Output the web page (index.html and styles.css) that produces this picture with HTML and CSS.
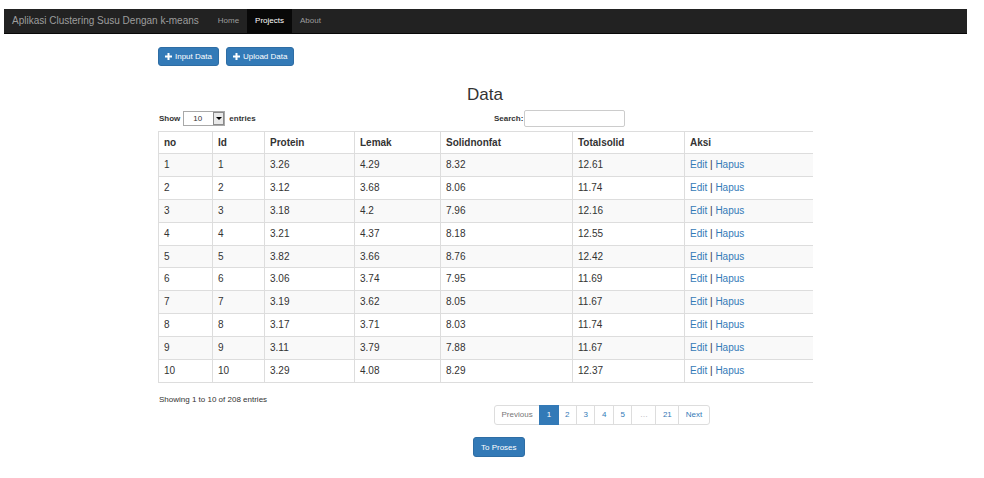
FILE: index.html
```html
<!DOCTYPE html>
<html>
<head>
<meta charset="utf-8">
<title>Data</title>
<link rel="stylesheet" href="styles.css">
</head>
<body>
<div class="page">
  <nav class="navbar">
    <span class="brand">Aplikasi Clustering Susu Dengan k-means</span>
    <ul class="nav">
      <li><a href="#">Home</a></li>
      <li class="active"><a href="#">Projects</a></li>
      <li><a href="#">About</a></li>
    </ul>
  </nav>
  <main class="container">
    <div class="toolbar">
      <button class="btn"><svg class="plus" viewBox="0 0 7 7" width="7" height="7"><path d="M2.5 0h2v2.5h2.5v2h-2.5v2.5h-2v-2.5h-2.5v-2h2.5z"/></svg>Input Data</button>
      <button class="btn"><svg class="plus" viewBox="0 0 7 7" width="7" height="7"><path d="M2.5 0h2v2.5h2.5v2h-2.5v2.5h-2v-2.5h-2.5v-2h2.5z"/></svg>Upload Data</button>
    </div>
    <h2 class="title">Data</h2>
    <div class="dt-top">
      <div class="length">Show <span class="select"><span class="sel-val">10</span><span class="sel-arrow"></span></span> entries</div>
      <div class="filter">Search:<span class="search-input"></span></div>
    </div>
    <table class="data">
      <colgroup>
        <col class="c-no"><col class="c-id"><col class="c-pro"><col class="c-lem"><col class="c-sol"><col class="c-tot"><col class="c-aksi">
      </colgroup>
      <thead>
        <tr><th>no</th><th>Id</th><th>Protein</th><th>Lemak</th><th>Solidnonfat</th><th>Totalsolid</th><th>Aksi</th></tr>
      </thead>
      <tbody>
        <tr><td>1</td><td>1</td><td>3.26</td><td>4.29</td><td>8.32</td><td>12.61</td><td><a href="#">Edit</a> | <a href="#">Hapus</a></td></tr>
        <tr><td>2</td><td>2</td><td>3.12</td><td>3.68</td><td>8.06</td><td>11.74</td><td><a href="#">Edit</a> | <a href="#">Hapus</a></td></tr>
        <tr><td>3</td><td>3</td><td>3.18</td><td>4.2</td><td>7.96</td><td>12.16</td><td><a href="#">Edit</a> | <a href="#">Hapus</a></td></tr>
        <tr><td>4</td><td>4</td><td>3.21</td><td>4.37</td><td>8.18</td><td>12.55</td><td><a href="#">Edit</a> | <a href="#">Hapus</a></td></tr>
        <tr><td>5</td><td>5</td><td>3.82</td><td>3.66</td><td>8.76</td><td>12.42</td><td><a href="#">Edit</a> | <a href="#">Hapus</a></td></tr>
        <tr><td>6</td><td>6</td><td>3.06</td><td>3.74</td><td>7.95</td><td>11.69</td><td><a href="#">Edit</a> | <a href="#">Hapus</a></td></tr>
        <tr><td>7</td><td>7</td><td>3.19</td><td>3.62</td><td>8.05</td><td>11.67</td><td><a href="#">Edit</a> | <a href="#">Hapus</a></td></tr>
        <tr><td>8</td><td>8</td><td>3.17</td><td>3.71</td><td>8.03</td><td>11.74</td><td><a href="#">Edit</a> | <a href="#">Hapus</a></td></tr>
        <tr><td>9</td><td>9</td><td>3.11</td><td>3.79</td><td>7.88</td><td>11.67</td><td><a href="#">Edit</a> | <a href="#">Hapus</a></td></tr>
        <tr><td>10</td><td>10</td><td>3.29</td><td>4.08</td><td>8.29</td><td>12.37</td><td><a href="#">Edit</a> | <a href="#">Hapus</a></td></tr>
      </tbody>
    </table>
    <div class="dt-bottom">
      <div class="info">Showing 1 to 10 of 208 entries</div>
      <ul class="pagination">
        <li class="prev">Previous</li>
        <li class="active">1</li>
        <li>2</li>
        <li>3</li>
        <li>4</li>
        <li>5</li>
        <li class="ellipsis">…</li>
        <li>21</li>
        <li class="next">Next</li>
      </ul>
    </div>
    <div class="proses"><button class="btn btn-proses">To Proses</button></div>
  </main>
</div>
</body>
</html>
```
FILE: styles.css
```css
body {
  margin: 0;
  font-family: "Liberation Sans", Arial, sans-serif;
  color: #333;
  background: #fff;
}

.page {
  width: 970px;
}

.navbar {
  margin: 9px 0 0 4px;
  width: 963px;
  height: 25px;
  box-sizing: border-box;
  background: #222;
  border-bottom: 1px solid #080808;
  display: flex;
  align-items: stretch;
}

.brand {
  font-size: 10px;
  line-height: 24px;
  color: #9d9d9d;
  padding: 0 11px 0 8px;
  white-space: nowrap;
}

.nav {
  display: flex;
  list-style: none;
  margin: 0;
  padding: 0;
}

.nav a {
  display: block;
  padding: 0 8px;
  line-height: 24px;
  font-size: 8px;
  color: #9d9d9d;
  text-decoration: none;
}

.nav .active a {
  background: #080808;
  color: #fff;
}

.container {
  width: 654px;
  margin: 0 auto;
}

.toolbar {
  display: flex;
  gap: 7px;
  margin-top: 13px;
}

.btn {
  display: inline-flex;
  align-items: center;
  gap: 3px;
  height: 19px;
  padding: 0 6px;
  font-family: inherit;
  font-size: 8px;
  color: #fff;
  background: #337ab7;
  border: 1px solid #2e6da4;
  border-radius: 3px;
}

.plus {
  fill: #fff;
  display: block;
}

.title {
  margin: 19px 0 0;
  font-size: 17px;
  font-weight: normal;
  line-height: 20px;
  text-align: center;
  color: #333;
}

.dt-top {
  display: grid;
  grid-template-columns: 336px auto;
  align-items: center;
  height: 17px;
  margin-top: 5px;
  font-size: 8px;
  font-weight: bold;
}

.length {
  display: flex;
  align-items: center;
  padding-left: 1px;
}

.select {
  display: flex;
  width: 42px;
  height: 15px;
  box-sizing: border-box;
  margin: 0 4px 0 3px;
  border: 1px solid #a9a9a9;
  background: #fff;
}

.sel-val {
  flex: 1;
  padding-left: 9px;
  font-weight: normal;
  font-size: 8px;
  line-height: 14px;
}

.sel-arrow {
  width: 11px;
  box-sizing: border-box;
  border: 1px solid #8a8a8a;
  background: #e9e9e9;
  position: relative;
}

.sel-arrow::after {
  content: "";
  position: absolute;
  left: 2px;
  top: 4px;
  border-left: 3px solid transparent;
  border-right: 3px solid transparent;
  border-top: 3px solid #000;
}

.filter {
  display: flex;
  align-items: center;
}

.search-input {
  display: block;
  width: 101px;
  height: 17px;
  box-sizing: border-box;
  margin-left: 1px;
  border: 1px solid #ccc;
  border-radius: 2px;
  background: #fff;
}

.data {
  margin-top: 4px;
  width: 654px;
  border-collapse: collapse;
  table-layout: fixed;
  font-size: 10px;
}

.c-no { width: 54px; }
.c-id { width: 52px; }
.c-pro { width: 90px; }
.c-lem { width: 86px; }
.c-sol { width: 132px; }
.c-tot { width: 112px; }
.c-aksi { width: 128px; }

.data th,
.data td {
  border: 1px solid #ddd;
  padding: 4px 5px;
  line-height: 14px;
  text-align: left;
  white-space: nowrap;
}

.data td {
  padding: 4px 5px 3.9px;
}

.data th {
  font-weight: bold;
  padding: 3.5px 5px 3.5px;
}

.data th:last-child,
.data td:last-child {
  border-right: none;
}

.data tbody tr:nth-child(odd) td {
  background: #f9f9f9;
}

.data a {
  color: #337ab7;
  text-decoration: none;
}

.dt-bottom {
  display: grid;
  grid-template-columns: 336px auto;
  align-items: start;
  margin-top: 12px;
}

.info {
  font-size: 8px;
  line-height: 10px;
  padding-left: 1px;
}

.pagination {
  display: flex;
  list-style: none;
  margin: 10px 0 0;
  padding: 0;
}

.pagination li {
  height: 20px;
  box-sizing: border-box;
  padding: 0 6.5px;
  margin-left: -1px;
  line-height: 18px;
  font-size: 8px;
  color: #337ab7;
  border: 1px solid #ddd;
  background: #fff;
}

.pagination .prev {
  margin-left: 0;
  color: #777;
  border-radius: 3px 0 0 3px;
}

.pagination .next {
  border-radius: 0 3px 3px 0;
}

.pagination .active {
  background: #337ab7;
  border-color: #337ab7;
  color: #fff;
  position: relative;
}

.pagination .ellipsis {
  color: #aaa;
  padding: 0 7.5px;
}

.proses {
  margin-top: 11px;
  padding-left: 315px;
}

.btn-proses {
  height: 20px;
  padding: 0 7px;
}
```
